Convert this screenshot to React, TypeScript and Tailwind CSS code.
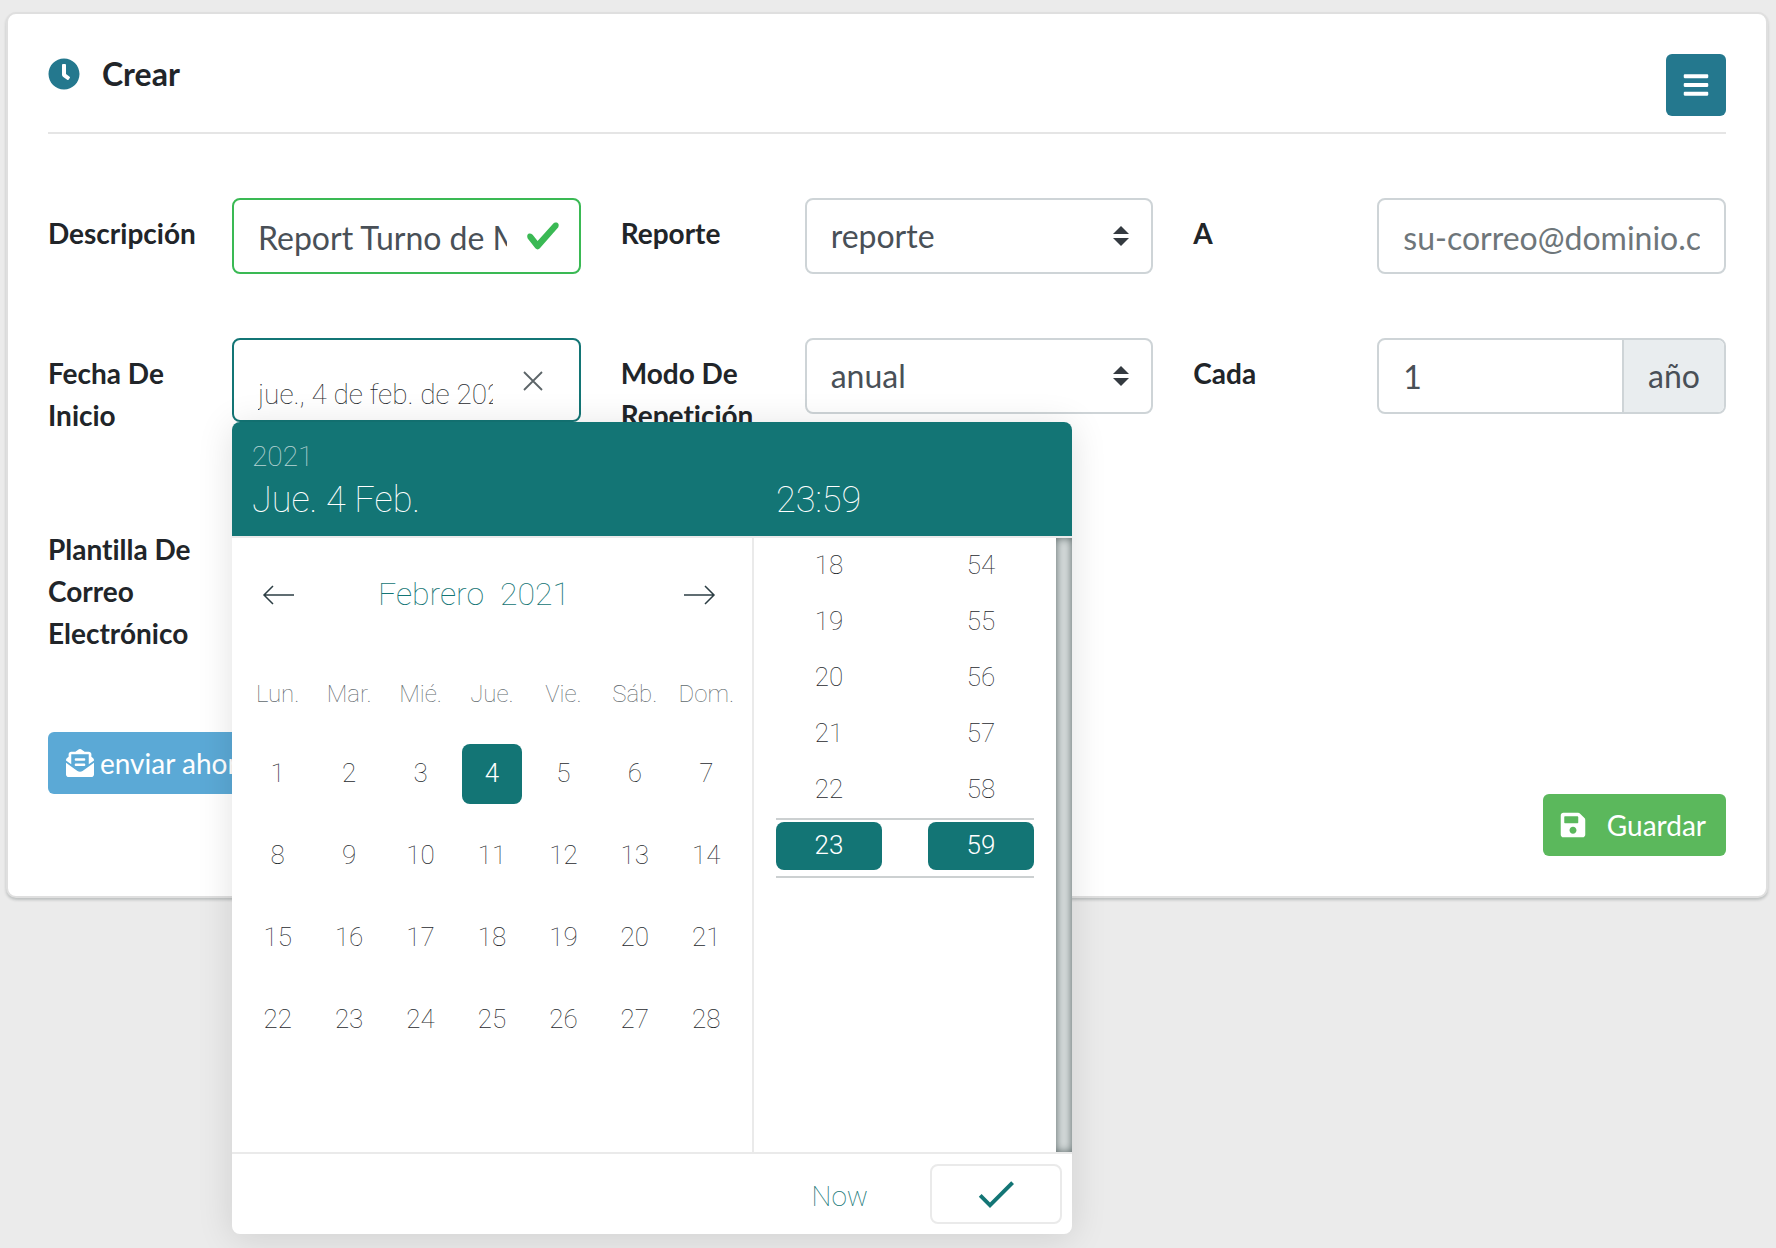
import React, { useState } from "react";
import {
  FaBars,
  FaClock,
  FaEnvelopeOpenText,
  FaSave,
} from "react-icons/fa";

const weekdays = ["Lun.", "Mar.", "Mié.", "Jue.", "Vie.", "Sáb.", "Dom."];
const weeks = [0, 1, 2, 3].map((w) =>
  [1, 2, 3, 4, 5, 6, 7].map((d) => w * 7 + d)
);
const times = [
  [18, 54],
  [19, 55],
  [20, 56],
  [21, 57],
  [22, 58],
];

const control =
  "w-full h-[76px] rounded-lg border-2 bg-white px-6 text-[32px] text-[#495057] focus:outline-none";

function Field({
  id,
  label,
  children,
}: {
  id: string;
  label: string;
  children?: React.ReactNode;
}) {
  return (
    <div className="flex items-start">
      <label
        htmlFor={id}
        className="w-[184px] shrink-0 py-[14px] pr-6 text-[28px] leading-[42px] font-bold text-[#212529]"
      >
        {label}
      </label>
      <div className="relative min-w-0 flex-1">{children}</div>
    </div>
  );
}

function Select({ id, options }: { id: string; options: string[] }) {
  return (
    <>
      <select
        id={id}
        className={`${control} appearance-none border-[#ced4d7]`}
      >
        {options.map((option) => (
          <option key={option}>{option}</option>
        ))}
      </select>
      <svg
        viewBox="0 0 4 5"
        className="pointer-events-none absolute top-7 right-6 h-5 w-4"
        fill="#343a40"
      >
        <path d="M2 0L0 2h4zm0 5L0 3h4z" />
      </svg>
    </>
  );
}

function Arrow({ flip }: { flip?: boolean }) {
  return (
    <svg
      viewBox="0 0 32 20"
      className={flip ? "h-5 w-8 rotate-180" : "h-5 w-8"}
      fill="none"
      stroke="#2c3e44"
      strokeWidth="1.5"
    >
      <path d="M32 10H2M11 1L2 10l9 9" />
    </svg>
  );
}

function DatePicker() {
  const [day, setDay] = useState(4);

  return (
    <div className="absolute top-full left-0 z-10 w-[840px] overflow-hidden rounded-lg bg-white font-[Roboto,sans-serif] font-thin shadow-[0_4px_36px_rgba(0,0,0,0.12)]">
      <div className="flex h-[114px] bg-[#137575] pt-[13px] text-white">
        <div className="w-[524px] pl-5">
          <div className="text-[28px] leading-[43px] opacity-70">2021</div>
          <div className="text-[36px] leading-[44px]">Jue. 4 Feb.</div>
        </div>
        <div className="pt-[43px] pl-5 text-[36px] leading-[44px]">23:59</div>
      </div>

      <div className="flex h-[616px] border-t-2 border-[#eaeaea]">
        <div className="w-[522px] border-r-2 border-[#eaeaea] px-[10px]">
          <div className="flex h-[114px] items-center justify-between pr-[26px] pl-5">
            <button type="button" aria-label="Mes anterior">
              <Arrow />
            </button>
            <div className="flex gap-4 pr-[30px] pb-[2px] text-[32px] text-[#137575]">
              <button type="button">Febrero</button>
              <button type="button">2021</button>
            </div>
            <button type="button" aria-label="Mes siguiente">
              <Arrow flip />
            </button>
          </div>
          <table className="w-full table-fixed text-center">
            <thead>
              <tr className="h-[81px] text-[24px] text-[#5f6a6e]">
                {weekdays.map((name) => (
                  <th key={name} className="p-0 pt-[2px] font-thin">
                    {name}
                  </th>
                ))}
              </tr>
            </thead>
            <tbody>
              {weeks.map((week) => (
                <tr key={week[0]} className="h-[82px]">
                  {week.map((d) => (
                    <td key={d} className="p-0">
                      <button
                        type="button"
                        onClick={() => setDay(d)}
                        className={
                          d === day
                            ? "size-[60px] rounded-lg bg-[#137575] pb-[2px] text-[26px] font-light text-white"
                            : "size-[60px] rounded-lg pb-[2px] text-[26px] text-[#1f2a2e]"
                        }
                      >
                        {d}
                      </button>
                    </td>
                  ))}
                </tr>
              ))}
            </tbody>
          </table>
        </div>

        <div className="flex-1 px-[22px] text-[26px] text-[#1f2a2e]">
          {times.map(([hour, minute]) => (
            <div key={hour} className="flex h-14 justify-between">
              <button type="button" className="w-[106px] pb-[2px]">
                {hour}
              </button>
              <button type="button" className="w-[106px] pb-[2px]">
                {minute}
              </button>
            </div>
          ))}
          <div className="flex h-[60px] justify-between border-y-2 border-[#ccd0d1] pt-[2px] font-light text-white">
            <button
              type="button"
              className="h-12 w-[106px] rounded-lg bg-[#137575] pb-[2px]"
            >
              23
            </button>
            <button
              type="button"
              className="h-12 w-[106px] rounded-lg bg-[#137575] pb-[2px]"
            >
              59
            </button>
          </div>
        </div>
        <div className="w-4 bg-[#d5dbdb] shadow-[inset_0_0_8px_rgba(0,20,20,0.6)]" />
      </div>

      <div className="flex h-[82px] items-center justify-end gap-[62px] border-t-2 border-[#eaeaea] pr-[10px]">
        <button type="button" className="pt-[6px] text-[28px] text-[#137575]">
          Now
        </button>
        <button
          type="button"
          aria-label="Aceptar"
          className="flex h-[60px] w-[132px] items-center justify-center rounded-lg border-2 border-[#eaeaea]"
        >
          <svg viewBox="0 0 24 24" className="size-12" fill="#137575">
            <path d="M9 16.2L4.8 12l-1.4 1.4L9 19 21 7l-1.4-1.4L9 16.2z" />
          </svg>
        </button>
      </div>
    </div>
  );
}

export default function App() {
  const [description, setDescription] = useState("Report Turno de Mañana");
  const [date, setDate] = useState("jue., 4 de feb. de 2021 23:59");
  const [every, setEvery] = useState("1");

  return (
    <div className="min-h-screen bg-[#ebebeb] pt-3 pr-2 pl-[6px] font-[Lato,sans-serif] [font-variant-ligatures:none]">
      <form
        className="rounded-[10px] border-2 border-[#dfdfdf] bg-white p-10 shadow-[0_2px_3px_rgba(0,20,20,0.2)]"
        onSubmit={(e) => e.preventDefault()}
      >
        <header className="flex items-start justify-between border-b-2 border-[#e5e5e5] pb-4">
          <h1 className="flex items-center gap-[22px] text-[32px] leading-10 font-bold text-[#212529]">
            <FaClock className="size-8 text-[#24788e]" />
            Crear
          </h1>
          <button
            type="button"
            aria-label="Menú"
            className="flex h-[62px] w-[60px] items-center justify-center rounded-md bg-[#24788e] text-white"
          >
            <FaBars className="size-7" />
          </button>
        </header>

        <div className="grid grid-cols-3 gap-x-10 gap-y-16 py-16">
          <Field id="description" label="Descripción">
            <input
              id="description"
              type="text"
              value={description}
              onChange={(e) => setDescription(e.target.value)}
              className={`${control} border-[#3ab954] pt-[2px] pr-[72px]`}
            />
            <svg
              viewBox="0 0 8 8"
              className="pointer-events-none absolute top-5 right-5 size-9"
              fill="#3ab954"
            >
              <path d="M2.3 6.73L.6 4.53c-.4-1.04.46-1.4 1.1-.8l1.1 1.4 3.4-3.8c.6-.63 1.6-.27 1.2.7l-4 4.6c-.43.5-.8.4-1.1.1z" />
            </svg>
          </Field>
          <Field id="report" label="Reporte">
            <Select id="report" options={["reporte"]} />
          </Field>
          <Field id="to" label="A">
            <input
              id="to"
              type="email"
              placeholder="su-correo@dominio.com"
              className={`${control} border-[#ced4d7] pt-[2px] placeholder:text-[#6e767a]`}
            />
          </Field>

          <Field id="start" label="Fecha De Inicio">
            <div className="flex h-[84px] items-center rounded-lg border-2 border-[#137575] bg-white pr-[34px] pl-6">
              <input
                id="start"
                type="text"
                value={date}
                onChange={(e) => setDate(e.target.value)}
                className="h-20 min-w-0 flex-1 pt-7 font-[Roboto,sans-serif] text-[28px] font-thin text-[#1f2a2e] focus:outline-none"
              />
              <button type="button" aria-label="Borrar" className="ml-7 pt-[2px]">
                <svg
                  viewBox="0 0 24 24"
                  className="size-6"
                  fill="none"
                  stroke="#5c6468"
                  strokeWidth="1.8"
                >
                  <path d="M3 3l18 18M21 3L3 21" />
                </svg>
              </button>
            </div>
            <DatePicker />
          </Field>
          <Field id="mode" label="Modo De Repetición">
            <Select id="mode" options={["anual", "mensual", "semanal"]} />
          </Field>
          <Field id="every" label="Cada">
            <div className="flex h-[76px] overflow-hidden rounded-lg border-2 border-[#ced4d7] text-[32px] text-[#495057]">
              <input
                id="every"
                type="text"
                value={every}
                onChange={(e) => setEvery(e.target.value)}
                className="min-w-0 flex-1 px-6 pt-[2px] focus:outline-none"
              />
              <span className="flex items-center border-l-2 border-[#ced4d7] bg-[#e9edef] px-6">
                año
              </span>
            </div>
          </Field>

          <Field id="template" label="Plantilla De Correo Electrónico">
            <Select id="template" options={["plantilla"]} />
          </Field>
        </div>

        <button
          type="button"
          className="flex h-[62px] items-center gap-[6px] rounded-md bg-[#5ba9d6] px-[18px] text-[28px] text-white"
        >
          <FaEnvelopeOpenText className="size-7" />
          enviar ahora
        </button>
        <div className="flex justify-end">
          <button
            type="submit"
            className="flex h-[62px] items-center gap-5 rounded-md bg-[#5bb85c] pr-5 pl-4 text-[28px] text-white"
          >
            <FaSave className="size-7" />
            Guardar
          </button>
        </div>
      </form>
    </div>
  );
}
